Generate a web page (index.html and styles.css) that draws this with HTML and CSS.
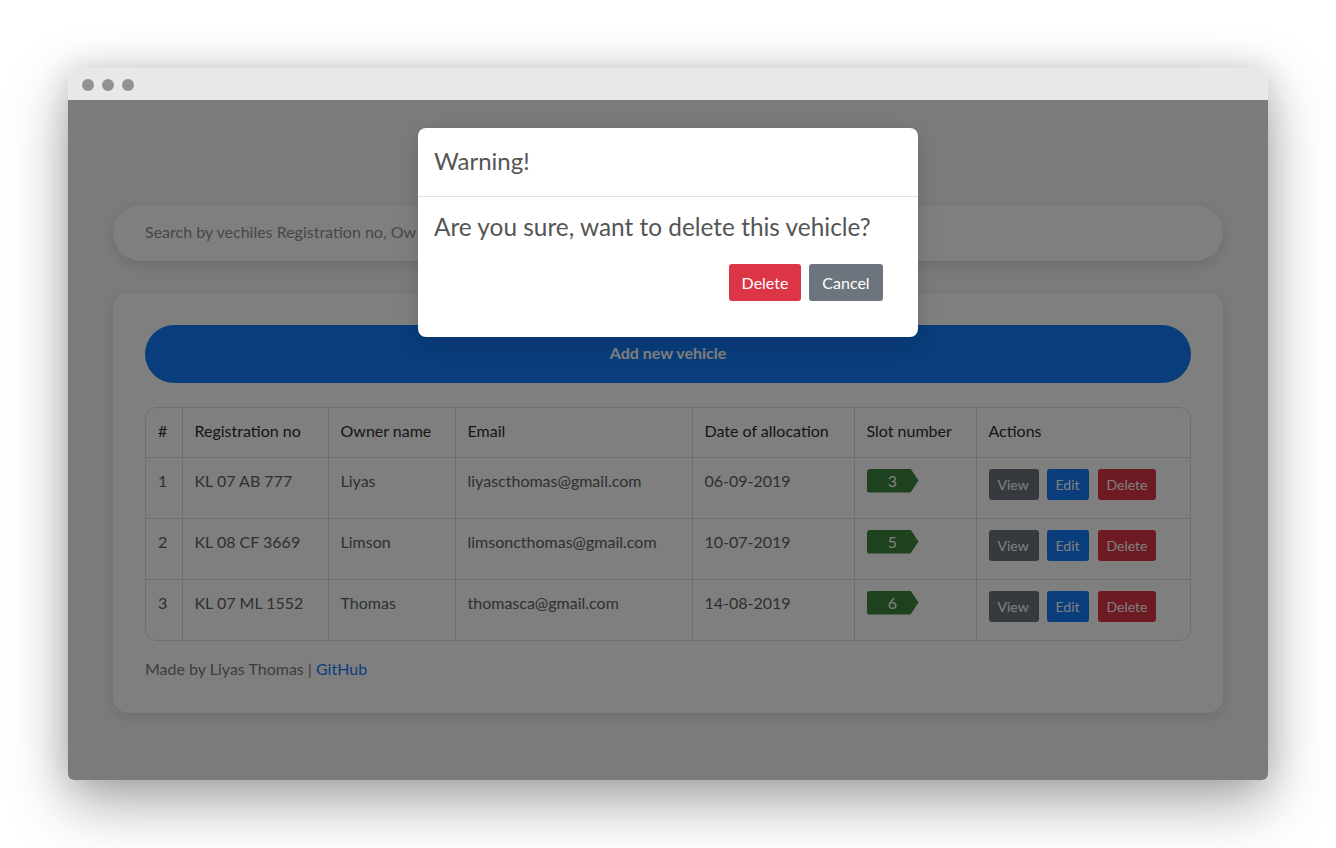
FILE: index.html
```html
<!DOCTYPE html>
<html>
<head>
<meta charset="utf-8">
<link rel="stylesheet" href="styles.css">
</head>
<body>
<div class="window">
  <div class="titlebar">
    <span class="dot"></span><span class="dot"></span><span class="dot"></span>
  </div>
  <div class="content">
    <div class="container">
      <div class="search"><span class="placeholder">Search by vechiles Registration no, Owner name, Email</span></div>
      <div class="card">
        <div class="add-btn">Add new vehicle</div>
        <div class="table-wrap">
          <table>
            <thead>
              <tr>
                <th class="c-num">#</th>
                <th class="c-reg">Registration no</th>
                <th class="c-own">Owner name</th>
                <th class="c-mail">Email</th>
                <th class="c-date">Date of allocation</th>
                <th class="c-slot">Slot number</th>
                <th class="c-act">Actions</th>
              </tr>
            </thead>
            <tbody>
              <tr>
                <td>1</td><td>KL 07 AB 777</td><td>Liyas</td><td>liyascthomas@gmail.com</td><td>06-09-2019</td>
                <td><span class="slot">3</span></td>
                <td><div class="acts"><span class="sbtn view">View</span><span class="sbtn edit">Edit</span><span class="sbtn del">Delete</span></div></td>
              </tr>
              <tr>
                <td>2</td><td>KL 08 CF 3669</td><td>Limson</td><td>limsoncthomas@gmail.com</td><td>10-07-2019</td>
                <td><span class="slot">5</span></td>
                <td><div class="acts"><span class="sbtn view">View</span><span class="sbtn edit">Edit</span><span class="sbtn del">Delete</span></div></td>
              </tr>
              <tr>
                <td>3</td><td>KL 07 ML 1552</td><td>Thomas</td><td>thomasca@gmail.com</td><td>14-08-2019</td>
                <td><span class="slot">6</span></td>
                <td><div class="acts"><span class="sbtn view">View</span><span class="sbtn edit">Edit</span><span class="sbtn del">Delete</span></div></td>
              </tr>
            </tbody>
          </table>
        </div>
        <p class="footer">Made by Liyas Thomas | <a href="#">GitHub</a></p>
      </div>
    </div>
    <div class="backdrop"></div>
    <div class="modal">
      <div class="modal-header">Warning!</div>
      <div class="modal-body">
        <p class="question">Are you sure, want to delete this vehicle?</p>
        <div class="modal-actions">
          <span class="mbtn danger">Delete</span>
          <span class="mbtn secondary">Cancel</span>
        </div>
      </div>
    </div>
  </div>
</div>
</body>
</html>
```
FILE: styles.css
```css
* { box-sizing: border-box; }
html, body { margin: 0; padding: 0; }
body {
  width: 1336px;
  height: 848px;
  background: #ffffff;
  padding: 68px 68px 0 68px;
  font-family: "Lato", "Liberation Sans", sans-serif;
  overflow: hidden;
}
.window {
  width: 1200px;
  height: 712px;
  border-radius: 6px;
  overflow: hidden;
  box-shadow: 0 22px 60px rgba(0, 0, 0, 0.35), 0 0 30px rgba(0, 0, 0, 0.12);
  display: flex;
  flex-direction: column;
}
.titlebar {
  height: 32px;
  background: #e8e8e8;
  display: flex;
  align-items: center;
  gap: 8px;
  padding-left: 14px;
  padding-top: 1px;
  flex-shrink: 0;
}
.dot {
  width: 12px;
  height: 12px;
  border-radius: 50%;
  background: #919191;
}
.content {
  position: relative;
  flex: 1;
  background: #f6f6f6;
  padding: 105px 45px 0 45px;
}
.container {
  width: 1110px;
  display: flex;
  flex-direction: column;
  gap: 32px;
}
.search {
  height: 56px;
  border-radius: 28px;
  background: #ffffff;
  box-shadow: 0 4px 14px rgba(0, 0, 0, 0.12);
  padding-left: 32px;
  padding-bottom: 3px;
  display: flex;
  align-items: center;
  font-size: 16px;
  color: #8f8f8f;
  white-space: nowrap;
  overflow: hidden;
}
.placeholder {
  max-width: 272px;
  overflow: hidden;
}
.card {
  background: #ffffff;
  border-radius: 16px;
  box-shadow: 0 4px 14px rgba(0, 0, 0, 0.1);
  padding: 32px;
}
.add-btn {
  height: 58px;
  border-radius: 29px;
  background: #137af8;
  color: #ffffff;
  font-weight: 700;
  font-size: 16px;
  display: flex;
  align-items: center;
  justify-content: center;
  padding-bottom: 3px;
  margin-bottom: 24px;
}
.table-wrap {
  border: 1px solid #dcdcdc;
  border-radius: 12px;
  overflow: hidden;
}
table {
  width: 100%;
  border-collapse: collapse;
  font-size: 16px;
}
th, td {
  text-align: left;
  vertical-align: top;
  padding: 11px 12px 12px 12px;
  line-height: 24px;
  border-right: 1px solid #dcdcdc;
  border-bottom: 1px solid #dcdcdc;
}
th:last-child, td:last-child { border-right: none; }
tbody tr:last-child td { border-bottom: none; }
th { font-weight: 400; color: #2c2c2c; height: 49px; }
td { color: #606060; height: 61px; }
.c-num { width: 36px; }
.c-reg { width: 146px; }
.c-own { width: 127px; }
.c-mail { width: 237px; }
.c-date { width: 162px; }
.c-slot { width: 122px; }
.slot {
  display: inline-block;
  width: 52px;
  height: 24px;
  line-height: 24px;
  background: #3d843d;
  color: #ffffff;
  text-align: center;
  border-radius: 3px 0 0 3px;
  clip-path: polygon(0 0, 44px 0, 52px 12px, 44px 24px, 0 24px);
  font-size: 16px;
}
.acts {
  display: flex;
  gap: 8px;
}
.sbtn {
  display: inline-block;
  height: 31px;
  line-height: 21px;
  padding: 5px 9px;
  border-radius: 3px;
  font-size: 14px;
  color: #ffffff;
}
.view { background: #6c757d; width: 50px; }
.edit { background: #137af8; width: 42px; }
.del { background: #dc3545; width: 58px; margin-left: 1px; }
.footer {
  margin: 16px 0 0 0;
  font-size: 16px;
  line-height: 24px;
  color: #7a7a7a;
}
.footer a { color: #137af8; text-decoration: none; }
.backdrop {
  position: absolute;
  inset: 0;
  background: rgba(0, 0, 0, 0.5);
}
.modal {
  position: absolute;
  top: 28px;
  left: 350px;
  width: 500px;
  background: #ffffff;
  border-radius: 8px;
  color: #555555;
  box-shadow: 0 6px 20px rgba(0, 0, 0, 0.15);
}
.modal-header {
  height: 69px;
  padding: 0 16px 4px 16px;
  display: flex;
  align-items: center;
  font-size: 24px;
  border-bottom: 1px solid #dee2e6;
}
.modal-body {
  padding: 14px 16px 36px 16px;
}
.question {
  margin: 0 0 21px 0;
  font-size: 24.4px;
  line-height: 32px;
}
.modal-actions {
  display: flex;
  justify-content: flex-end;
  gap: 8px;
  padding-right: 19px;
}
.mbtn {
  display: inline-block;
  height: 37px;
  line-height: 37px;
  padding: 0 12px;
  border-radius: 3px;
  color: #ffffff;
  font-size: 16px;
}
.danger { background: #dc3545; width: 72px; text-align: center; }
.secondary { background: #6c757d; width: 74px; text-align: center; }
```
